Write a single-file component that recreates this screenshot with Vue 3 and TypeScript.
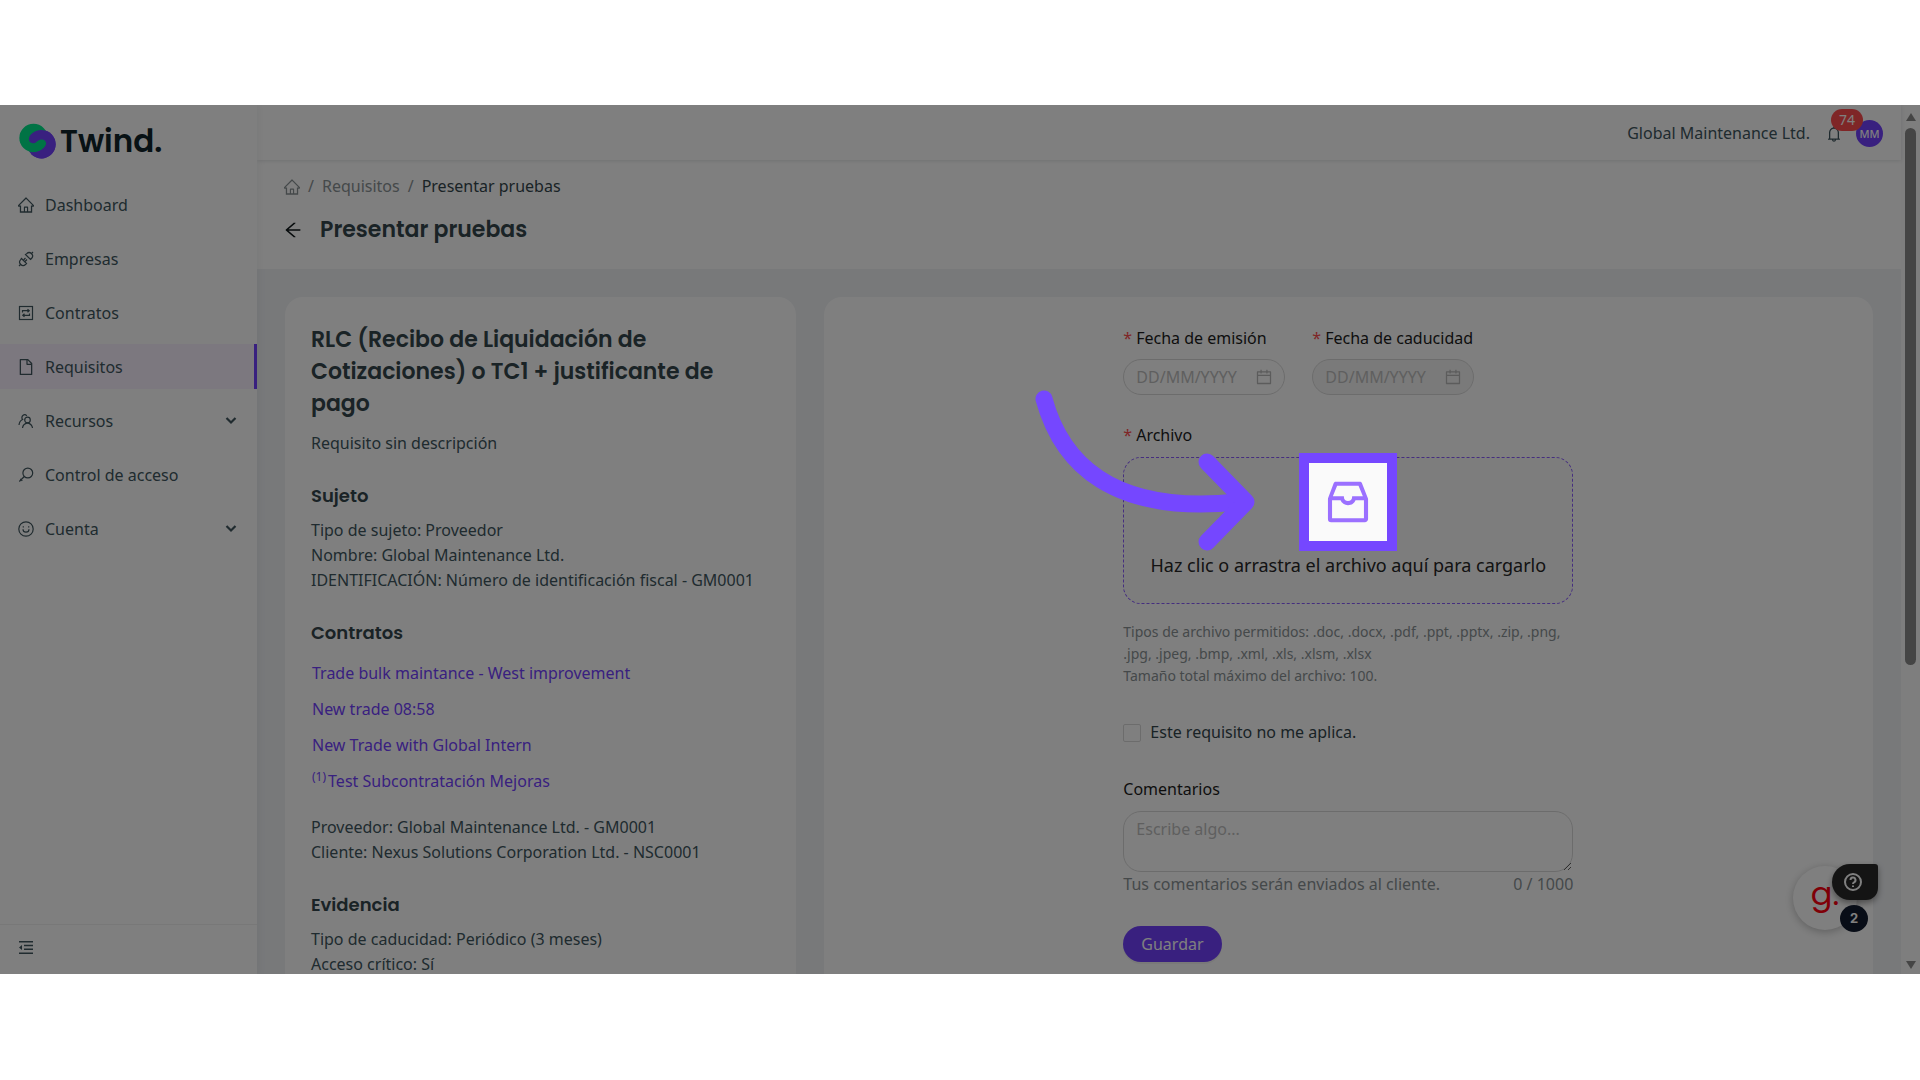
<script setup lang="ts">
import { ref } from 'vue'

interface MenuItem {
  label: string
  icon: string
  active?: boolean
  expandable?: boolean
}

const menu: MenuItem[] = [
  { label: 'Dashboard', icon: 'home' },
  { label: 'Empresas', icon: 'plug' },
  { label: 'Contratos', icon: 'swap' },
  { label: 'Requisitos', icon: 'file', active: true },
  { label: 'Recursos', icon: 'team', expandable: true },
  { label: 'Control de acceso', icon: 'key' },
  { label: 'Cuenta', icon: 'smile', expandable: true },
]

const homePath =
  'M946.5 505L560.1 118.8l-25.9-25.9a31.5 31.5 0 00-44.4 0L77.5 505a63.9 63.9 0 00-18.8 46c.4 35.2 29.7 63.3 64.9 63.3h42.5V940h691.8V614.3h43.4c17.1 0 33.2-6.7 45.3-18.8a63.6 63.6 0 0018.7-45.3c0-17-6.7-33.1-18.8-45.2zM568 868H456V664h112v204zm217.9-325.7V868H632V640c0-22.1-17.9-40-40-40H432c-22.1 0-40 17.9-40 40v228H238.1V542.3h-96l370-369.7 23.1 23.1L882 542.3h-96.1z'
const calendarPath =
  'M880 184H712v-64c0-4.4-3.6-8-8-8h-56c-4.4 0-8 3.6-8 8v64H384v-64c0-4.4-3.6-8-8-8h-56c-4.4 0-8 3.6-8 8v64H144c-17.7 0-32 14.3-32 32v664c0 17.7 14.3 32 32 32h736c17.7 0 32-14.3 32-32V216c0-17.7-14.3-32-32-32zm-40 656H184V460h656v380zM184 392V256h128v48c0 4.4 3.6 8 8 8h56c4.4 0 8-3.6 8-8v-48h256v48c0 4.4 3.6 8 8 8h56c4.4 0 8-3.6 8-8v-48h128v136H184z'

const contracts = [
  { name: 'Trade bulk maintance - West improvement', level: '' },
  { name: 'New trade 08:58', level: '' },
  { name: 'New Trade with Global Intern', level: '' },
  { name: 'Test Subcontratación Mejoras', level: '(1)' },
]

const issued = ref('')
const expires = ref('')
const notApplicable = ref(false)
const comments = ref('')
</script>

<template>
  <div class="page">
    <div class="app">
      <aside class="sidebar">
        <a class="logo" href="#" aria-label="Twind">
          <svg class="logo-mark" viewBox="58 100 112 108" aria-hidden="true">
            <circle cx="126" cy="164" r="43" fill="#7241ff" />
            <circle cx="102" cy="145" r="43" fill="#00e68a" />
            <path
              d="M126 121A43 43 0 1 1 95 194L102 188C124 188 140 176 140 161C140 149 124 145 114 154C108 160 104 161 100 161C92 161 88 155 88 149C88 135 105 121 126 121Z"
              fill="#7241ff"
            />
          </svg>
          <span class="logo-text">Twind.</span>
        </a>
        <nav class="menu">
          <a
            v-for="item in menu"
            :key="item.label"
            href="#"
            class="menu-item"
            :class="{ active: item.active }"
          >
            <svg v-if="item.icon === 'home'" class="icon" viewBox="64 64 896 896" fill="currentColor">
              <path :d="homePath" />
            </svg>
            <svg v-else-if="item.icon === 'file'" class="icon" viewBox="64 64 896 896" fill="currentColor">
              <path
                d="M854.6 288.6L639.4 73.4c-6-6-14.1-9.4-22.6-9.4H192c-17.7 0-32 14.3-32 32v832c0 17.7 14.3 32 32 32h640c17.7 0 32-14.3 32-32V311.3c0-8.5-3.4-16.7-9.4-22.7zM790.2 326H602V137.8L790.2 326zm1.8 562H232V136h302v216a42 42 0 0042 42h216v494z"
              />
            </svg>
            <svg v-else class="icon line" viewBox="0 0 16 16">
              <template v-if="item.icon === 'plug'">
                <path d="M1 15l2-2M13 3l2-2" />
                <path d="M3.500 7.500l5 5-1 1a3.200 3.200 0 0 1-4.800-4.800z" />
                <path d="M7.500 3.500l5 5 1-1a3.200 3.200 0 0 0-4.800-4.800z" />
                <path d="M5.500 9l2-2M7 10.500l2-2" />
              </template>
              <template v-else-if="item.icon === 'swap'">
                <rect x="1.500" y="1.500" width="13" height="13" />
                <path d="M4.500 7.500V5.700h6.500M9.500 4.200L11.200 5.700 9.500 7.200M11.500 8.500v1.800H5M6.500 8.800L4.800 10.300l1.700 1.500" />
              </template>
              <template v-else-if="item.icon === 'team'">
                <circle cx="9.500" cy="7" r="2.800" />
                <path d="M4.500 15c.3-2.600 1.800-4.500 5-5.200c3 .7 4.700 2.600 5 5.200" />
                <path d="M8.800 2.800a2.700 2.700 0 1 0-4.200 3.700C2.200 7.500 1.300 9.200 1 12" />
              </template>
              <template v-else-if="item.icon === 'key'">
                <circle cx="9.800" cy="6" r="4.900" />
                <path d="M6.300 9.500L1.300 14.500M2.300 11.800l2 2" />
              </template>
              <template v-else>
                <circle cx="8" cy="8" r="7.200" />
                <path d="M5 8.200a3 3 0 0 0 6 0M5.300 5.200v1.200M10.700 5.200v1.200" />
              </template>
            </svg>
            <span>{{ item.label }}</span>
            <svg v-if="item.expandable" class="chevron" viewBox="0 0 12 12">
              <path d="M1.500 3L6 7.500L10.500 3" />
            </svg>
          </a>
        </nav>
        <div class="sidebar-footer">
          <button type="button" class="plain" aria-label="Contraer menú">
            <svg class="icon" viewBox="0 0 16 16" fill="currentColor">
              <path d="M1 1h14v1.500H1zM6 4.800h9v1.500H6zM6 8.600h9v1.500H6zM1 12.400h14v1.500H1zM1 7.500L4 5v5z" />
            </svg>
          </button>
        </div>
      </aside>

      <div class="main">
        <header class="topbar">
          <span>Global Maintenance Ltd.</span>
          <button type="button" class="plain bell" aria-label="Notificaciones">
            <svg class="icon" viewBox="64 64 896 896" fill="currentColor">
              <path
                d="M816 768h-24V428c0-141.1-104.3-257.7-240-277.1V112c0-22.1-17.900-40-40-40s-40 17.900-40 40v38.900c-135.700 19.400-240 136-240 277.100v340h-24c-17.700 0-32 14.300-32 32v32c0 4.400 3.600 8 8 8h216c0 61.800 50.200 112 112 112s112-50.200 112-112h216c4.400 0 8-3.600 8-8v-32c0-17.700-14.300-32-32-32zM512 888c-26.500 0-48-21.500-48-48h96c0 26.500-21.500 48-48 48zM304 768V428c0-55.600 21.600-107.800 60.900-147.100S456.400 220 512 220c55.600 0 107.800 21.600 147.100 60.900S720 372.400 720 428v340H304z"
              />
            </svg>
            <span class="count">74</span>
          </button>
          <span class="avatar">MM</span>
        </header>

        <section class="page-head">
          <nav class="breadcrumb" aria-label="Ruta">
            <a href="#" aria-label="Inicio">
              <svg class="icon" viewBox="64 64 896 896" fill="currentColor"><path :d="homePath" /></svg>
            </a>
            <span>/</span>
            <a href="#">Requisitos</a>
            <span>/</span>
            <span class="current">Presentar pruebas</span>
          </nav>
          <div class="title-row">
            <button type="button" class="plain back" aria-label="Volver">
              <svg viewBox="64 64 896 896" fill="currentColor">
                <path
                  d="M872 474H286.900l350.200-304c5.600-4.900 2.200-14-5.200-14h-88.500c-3.900 0-7.600 1.400-10.500 3.900L155 487.800a31.960 31.960 0 000 48.300L535.100 866c1.500 1.300 3.300 2 5.200 2h91.500c7.400 0 10.800-9.200 5.200-14L286.900 550H872c4.400 0 8-3.600 8-8v-60c0-4.400-3.600-8-8-8z"
                />
              </svg>
            </button>
            <h1>Presentar pruebas</h1>
          </div>
        </section>

        <div class="content">
          <article class="card details">
            <h2>RLC (Recibo de Liquidación de Cotizaciones) o TC1 + justificante de pago</h2>
            <p>Requisito sin descripción</p>

            <h3>Sujeto</h3>
            <p>Tipo de sujeto: Proveedor</p>
            <p>Nombre: Global Maintenance Ltd.</p>
            <p>IDENTIFICACIÓN: Número de identificación fiscal - GM0001</p>

            <h3>Contratos</h3>
            <ul class="contracts">
              <li v-for="c in contracts" :key="c.name">
                <a href="#"><sup v-if="c.level">{{ c.level }}</sup>{{ c.name }}</a>
              </li>
            </ul>
            <p>Proveedor: Global Maintenance Ltd. - GM0001</p>
            <p>Cliente: Nexus Solutions Corporation Ltd. - NSC0001</p>

            <h3>Evidencia</h3>
            <p>Tipo de caducidad: Periódico (3 meses)</p>
            <p>Acceso crítico: Sí</p>
          </article>

          <section class="card form-card">
            <form class="form" @submit.prevent>
              <div class="dates">
                <div class="field">
                  <label class="required" for="issued">Fecha de emisión</label>
                  <div class="date-box">
                    <input id="issued" v-model="issued" type="text" placeholder="DD/MM/YYYY" />
                    <svg class="icon" viewBox="64 64 896 896" fill="currentColor"><path :d="calendarPath" /></svg>
                  </div>
                </div>
                <div class="field">
                  <label class="required" for="expires">Fecha de caducidad</label>
                  <div class="date-box disabled">
                    <input id="expires" v-model="expires" type="text" placeholder="DD/MM/YYYY" disabled />
                    <svg class="icon" viewBox="64 64 896 896" fill="currentColor"><path :d="calendarPath" /></svg>
                  </div>
                </div>
              </div>

              <label class="required" for="drop">Archivo</label>
              <div class="drop-area">
                <button id="drop" type="button" class="dropzone">
                  <svg class="inbox" viewBox="64 64 896 896" fill="currentColor">
                    <path
                      d="M885.200 446.300l-.2-.8-112.200-285.100c-5-16.100-19.900-27.200-36.800-27.200H281.200c-17 0-32.100 11.300-36.900 27.600L139.400 443l-.3.7-.2.8c-1.300 4.900-1.700 9.900-1 14.800-.1 1.600-.2 3.200-.2 4.800V830a60.900 60.900 0 0060.800 60.800h627.200c33.500 0 60.800-27.300 60.900-60.800V464.100c0-1.300 0-2.600-.1-3.700.4-4.900 0-9.600-1.300-14.100zm-295.800-43l-.3 15.700c-.8 44.900-31.800 75.100-77.100 75.100-22.100 0-41.100-7.100-54.800-20.600S436 441.200 435.600 419l-.3-15.700H229.500L309 210h399.200l81.700 193.300H589.400zm-375 76.800h157.300c24.300 57.100 76 90.800 140.400 90.800 33.700 0 65-9.400 90.300-27.200 22.200-15.600 39.500-37.400 50.700-63.600h156.500V814H214.400V480.100z"
                    />
                  </svg>
                  <span>Haz clic o arrastra el archivo aquí para cargarlo</span>
                </button>
                <div class="spotlight"></div>
                <svg class="pointer" viewBox="0 0 226 166" aria-hidden="true">
                  <path d="M12 12C30 78 82 128 206 115" />
                  <path d="M175 75L214 115L175 155" />
                </svg>
              </div>

              <p class="file-help">
                Tipos de archivo permitidos: .doc, .docx, .pdf, .ppt, .pptx, .zip, .png, .jpg, .jpeg, .bmp, .xml, .xls,
                .xlsm, .xlsx<br />Tamaño total máximo del archivo: 100.
              </p>

              <label class="check">
                <input v-model="notApplicable" type="checkbox" />
                <span>Este requisito no me aplica.</span>
              </label>

              <label for="comments">Comentarios</label>
              <textarea id="comments" v-model="comments" placeholder="Escribe algo..." maxlength="1000"></textarea>
              <div class="hint">
                <span>Tus comentarios serán enviados al cliente.</span>
                <span>{{ comments.length }} / 1000</span>
              </div>

              <button type="submit" class="save">Guardar</button>
            </form>
          </section>
        </div>
      </div>

      <div class="scrollbar" aria-hidden="true">
        <svg viewBox="0 0 12 10"><path d="M6 1L11 9H1z" /></svg>
        <div class="track"><div class="thumb"></div></div>
        <svg viewBox="0 0 12 10"><path d="M6 9L1 1h10z" /></svg>
      </div>

      <button type="button" class="guide" aria-label="Guía">g.</button>
      <button type="button" class="help" aria-label="Ayuda">
        <svg viewBox="0 0 20 20">
          <circle cx="10" cy="10" r="8" />
          <path d="M7.500 8a2.500 2.500 0 1 1 3.600 2.300c-.8.400-1.100.8-1.100 1.700M10 13.500v1.500" />
        </svg>
      </button>
      <span class="guide-count">2</span>
    </div>
  </div>
</template>

<style>
body {
  margin: 0;
  background: #fff;
}
</style>

<style scoped>
* {
  box-sizing: border-box;
}

.page {
  height: 100vh;
  padding: 105px 0 106px;
  overflow: hidden;
  font: 16px/25px 'Noto Sans', sans-serif;
  color: #40565e;
}

.app {
  position: relative;
  display: grid;
  grid-template: minmax(0, 1fr) / 257px minmax(0, 1fr) 19px;
  height: 100%;
  overflow: hidden;
  background: #fff;
}

a {
  color: inherit;
  text-decoration: none;
}

p,
h1,
h2,
h3,
ul {
  margin: 0;
  padding: 0;
}

button,
input,
textarea {
  font: inherit;
  color: inherit;
}

.plain {
  display: flex;
  padding: 0;
  border: 0;
  background: none;
}

.icon {
  flex: none;
  width: 16px;
  height: 16px;
}

.line {
  fill: none;
  stroke: currentColor;
  stroke-width: 1.2;
}

.sidebar {
  position: relative;
  z-index: 1;
  display: flex;
  flex-direction: column;
  background: #fff;
  box-shadow: 2px 0 8px rgba(29, 35, 41, 0.05);
}

.logo {
  display: flex;
  align-items: center;
  gap: 4px;
  height: 77px;
  padding: 0 19px 6px;
  color: #10242a;
}

.logo-mark {
  width: 37px;
  height: 36px;
}

.logo-text {
  font: 600 31px/36px Poppins, Lato, sans-serif;
}

.menu {
  display: flex;
  flex: 1;
  flex-direction: column;
  gap: 9px;
}

.menu-item {
  display: flex;
  align-items: center;
  gap: 11px;
  height: 45px;
  padding: 1px 17px 0 18px;
  border-right: 3px solid transparent;
}

.active {
  border-right-color: #7241ff;
  background: #f9f0ff;
}

.chevron {
  width: 12px;
  height: 12px;
  margin-left: auto;
  fill: none;
  stroke: currentColor;
  stroke-width: 2.2;
}

.sidebar-footer {
  display: flex;
  align-items: center;
  height: 50px;
  padding: 0 18px 4px;
  border-top: 1px solid #f0f0f0;
}

.main {
  min-width: 0;
  background: #f0f2f5;
}

.topbar {
  position: relative;
  display: flex;
  align-items: center;
  justify-content: flex-end;
  gap: 16px;
  height: 55px;
  padding: 2px 18px 0 28px;
  background: #fff;
  box-shadow: 0 1px 4px rgba(0, 21, 41, 0.12);
}

.bell {
  position: relative;
  margin-right: -2px;
}

.count {
  position: absolute;
  top: -17px;
  left: 5px;
  width: 32px;
  height: 22px;
  border-radius: 11px;
  background: #ff4d4f;
  color: #fff;
  font-size: 14px;
  line-height: 22px;
}

.avatar {
  width: 27px;
  height: 27px;
  border-radius: 50%;
  background: #7241ff;
  color: #fff;
  font-size: 11px;
  font-weight: 500;
  line-height: 27px;
  text-align: center;
}

.page-head {
  height: 109px;
  padding: 14px 28px 0 27px;
  background: #fff;
}

.breadcrumb {
  display: flex;
  align-items: center;
  gap: 8px;
  color: #8a9295;
}

.breadcrumb .icon {
  display: block;
}

.current {
  color: #34464c;
}

.title-row {
  display: flex;
  align-items: center;
  gap: 18px;
  margin-top: 15px;
  color: #10181b;
}

.back svg {
  width: 18px;
  height: 18px;
}

h1,
h2,
h3 {
  color: #34464c;
  font-family: Poppins, Inter, sans-serif;
  font-weight: 600;
}

h1,
h2 {
  font-size: 22px;
  line-height: 32px;
}

h3 {
  margin: 27px 0 10px;
  font-size: 18px;
  line-height: 25px;
}

.content {
  display: grid;
  grid-template-columns: repeat(3, minmax(0, 1fr));
  gap: 28px;
  padding: 28px;
}

.card {
  min-height: 900px;
  border-radius: 18px;
  background: #fff;
}

.details {
  padding: 27px 26px;
}

.details h2 {
  margin-bottom: 11px;
}

.contracts {
  margin-bottom: 16px;
  padding-left: 1px;
  list-style: none;
  line-height: 36px;
  color: #7241ff;
}

sup {
  margin-right: 2px;
  font-size: 12px;
  line-height: 0;
}

.form-card {
  grid-column: span 2;
  padding: 29px 28px;
}

.form {
  display: flex;
  flex-direction: column;
  width: 450px;
  max-width: 100%;
  margin: 0 auto;
}

.form label {
  color: #1c1c1c;
}

.required::before {
  margin-right: 4px;
  color: #ff4d4f;
  content: '*';
}

.dates {
  display: flex;
  gap: 27px;
  margin-bottom: 28px;
}

.field {
  width: 162px;
}

.field label {
  display: block;
  white-space: nowrap;
}

.date-box {
  display: flex;
  align-items: center;
  height: 36px;
  margin-top: 8px;
  padding: 0 12px;
  border: 1px solid #d9d9d9;
  border-radius: 18px;
  color: #b8b8b8;
}

.date-box input {
  flex: 1;
  min-width: 0;
  padding: 0;
  border: 0;
  background: none;
}

.disabled {
  background: #f5f5f5;
}

::placeholder {
  color: #bfbfbf;
  opacity: 1;
}

.drop-area {
  position: relative;
  margin-top: 9px;
}

.dropzone {
  display: flex;
  flex-direction: column;
  align-items: center;
  gap: 27px;
  width: 100%;
  height: 147px;
  padding: 20px 0 0;
  border: 1px dashed #8a5cff;
  border-radius: 18px;
  background: #fafafa;
  color: #262626;
  font-size: 18px;
}

.inbox {
  width: 48px;
  height: 48px;
  color: #9b70ff;
}

/* Tour step: lights one target and dims the rest of the app. */
.spotlight {
  position: absolute;
  top: -4px;
  left: 50%;
  z-index: 10;
  width: 98px;
  height: 98px;
  margin-left: -49px;
  border: 10px solid #7547ff;
  box-shadow: 0 0 0 3000px rgba(0, 0, 0, 0.5);
  pointer-events: none;
}

.pointer {
  position: absolute;
  top: -70px;
  right: 315px;
  z-index: 11;
  width: 226px;
  height: 166px;
  fill: none;
  stroke: #7547ff;
  stroke-width: 17;
  stroke-linecap: round;
  stroke-linejoin: round;
  pointer-events: none;
}

.file-help {
  margin: 17px 0 33px;
  color: #8a9295;
  font-size: 14px;
  line-height: 22px;
}

.form .check {
  display: flex;
  align-items: center;
  gap: 9px;
  margin-bottom: 32px;
  color: #34464c;
}

.check input {
  width: 18px;
  height: 18px;
  margin: 0;
  border: 1px solid #d9d9d9;
  border-radius: 2px;
  background: #fff;
  appearance: none;
}

textarea {
  display: block;
  height: 61px;
  margin-top: 9px;
  padding: 5px 12px;
  border: 1px solid #d9d9d9;
  border-radius: 18px;
  background: #fff;
  resize: vertical;
}

.hint {
  display: flex;
  justify-content: space-between;
  color: #8a9295;
}

.save {
  align-self: flex-start;
  height: 36px;
  margin-top: 29px;
  padding: 0 18px;
  border: 0;
  border-radius: 18px;
  background: #7241ff;
  box-shadow: 0 2px 0 rgba(0, 0, 0, 0.05);
  color: #fff;
}

.scrollbar {
  display: flex;
  flex-direction: column;
  align-items: center;
  padding: 7px 0 4px;
  background: #fcfcfc;
}

.scrollbar svg {
  width: 12px;
  height: 10px;
  fill: #8b8b8b;
}

.track {
  flex: 1;
  width: 11px;
  padding: 6px 0;
}

.thumb {
  height: 65%;
  border-radius: 6px;
  background: #8b8b8b;
}

.guide {
  position: absolute;
  right: 63px;
  bottom: 44px;
  width: 64px;
  height: 64px;
  padding: 0 0 8px;
  border: 0;
  border-radius: 50%;
  background: #fff;
  box-shadow: 0 2px 8px rgba(0, 0, 0, 0.25);
  color: #ff0010;
  font: 400 32px/50px Poppins, Lato, sans-serif;
}

.help {
  position: absolute;
  right: 42px;
  bottom: 74px;
  display: grid;
  place-items: center;
  width: 46px;
  height: 36px;
  padding: 0 4px 0 0;
  border: 0;
  border-radius: 18px 3px 12px 18px;
  background: #282828;
  box-shadow: 0 3px 6px rgba(0, 0, 0, 0.4);
}

.help svg {
  width: 20px;
  height: 20px;
  fill: none;
  stroke: #fff;
  stroke-width: 2;
}

.guide-count {
  position: absolute;
  right: 52px;
  bottom: 42px;
  width: 28px;
  height: 27px;
  border-radius: 50%;
  background: #101a2e;
  color: #fff;
  font: 700 13px/27px Inter, sans-serif;
  text-align: center;
}
</style>
